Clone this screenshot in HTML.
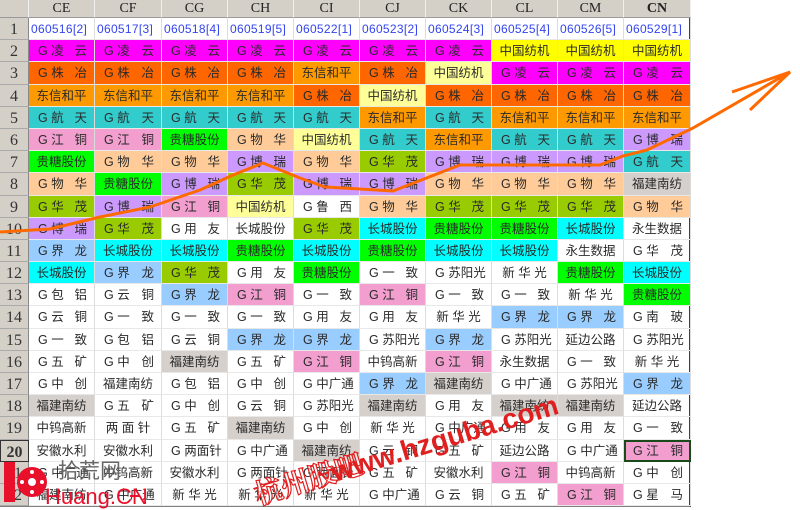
<!DOCTYPE html>
<html><head><meta charset="utf-8"><style>
*{margin:0;padding:0;box-sizing:border-box}
body{width:800px;height:510px;background:#fff;position:relative;overflow:hidden;font-family:"Liberation Sans","Noto Sans CJK SC",sans-serif}
#g{position:absolute;left:0;top:0;display:grid;grid-template-columns:29px 66px 67px 66px 66px 66px 66px 66px 66px 66px 67px;grid-template-rows:18px repeat(22,22.2px);width:691px;border-right:2px solid #404040;border-bottom:1px solid #808080}
#g>div{position:relative;font-size:12.5px;line-height:23px;white-space:pre;padding-left:9px;color:#2a2a2a;border-right:1px solid #dcdcdc;border-bottom:1px solid #e8e8e8;overflow:hidden;font-family:"Liberation Sans","WenQuanYi Zen Hei","Noto Sans CJK SC",sans-serif}
#g>div b{position:absolute;right:7px;top:0;font-weight:normal}
#g>div.c{padding-left:0;text-align:center}
#g>div.h{background:#d4d0c8;text-align:center;padding:0;font-size:14px;line-height:18px;color:#222;border-right:1px solid #f0f0f0;border-bottom:1px solid #999;font-family:"Liberation Serif",serif}
#g>div.n{background:#d4d0c8;text-align:center;padding:0;font-size:16px;line-height:24px;color:#333;border-bottom:1px solid #aaa;border-right:1px solid #888;font-family:"Liberation Serif",serif}
#g>div.d{color:#3344ee;font-size:12px;padding-left:2px;font-family:"Liberation Sans",sans-serif;letter-spacing:0.3px}
.M{background:#ff00ff}.D{background:#ff6600}.O{background:#ff9900}.T{background:#33cccc}.P{background:#f29fd0}.G{background:#00ff00}.E{background:#ffcc99}.U{background:#cc99ff}.V{background:#99cc00}.L{background:#ffff99}.Y{background:#ffff00}.C{background:#00ffff}.B{background:#99ccff}.R{background:#d6d0cc}
#g>div.sel{outline:2px solid #1a4a1a;outline-offset:-2px}
</style></head><body>
<div id="g">
<div class="h"></div><div class="h">CE</div><div class="h">CF</div><div class="h">CG</div><div class="h">CH</div><div class="h">CI</div><div class="h">CJ</div><div class="h">CK</div><div class="h">CL</div><div class="h">CM</div><div class="h" style="font-weight:bold">CN</div>
<div class="n">1</div><div class="d">060516[2]</div><div class="d">060517[3]</div><div class="d">060518[4]</div><div class="d">060519[5]</div><div class="d">060522[1]</div><div class="d">060523[2]</div><div class="d">060524[3]</div><div class="d">060525[4]</div><div class="d">060526[5]</div><div class="d">060529[1]</div>
<div class="n">2</div><div class="M">G 凌<b>云</b></div><div class="M">G 凌<b>云</b></div><div class="M">G 凌<b>云</b></div><div class="M">G 凌<b>云</b></div><div class="M">G 凌<b>云</b></div><div class="M">G 凌<b>云</b></div><div class="M">G 凌<b>云</b></div><div class="Y c">中国纺机</div><div class="Y c">中国纺机</div><div class="Y c">中国纺机</div>
<div class="n">3</div><div class="D">G 株<b>冶</b></div><div class="D">G 株<b>冶</b></div><div class="D">G 株<b>冶</b></div><div class="D">G 株<b>冶</b></div><div class="O c">东信和平</div><div class="D">G 株<b>冶</b></div><div class="L c">中国纺机</div><div class="M">G 凌<b>云</b></div><div class="M">G 凌<b>云</b></div><div class="M">G 凌<b>云</b></div>
<div class="n">4</div><div class="O c">东信和平</div><div class="O c">东信和平</div><div class="O c">东信和平</div><div class="O c">东信和平</div><div class="D">G 株<b>冶</b></div><div class="L c">中国纺机</div><div class="D">G 株<b>冶</b></div><div class="D">G 株<b>冶</b></div><div class="D">G 株<b>冶</b></div><div class="D">G 株<b>冶</b></div>
<div class="n">5</div><div class="T">G 航<b>天</b></div><div class="T">G 航<b>天</b></div><div class="T">G 航<b>天</b></div><div class="T">G 航<b>天</b></div><div class="T">G 航<b>天</b></div><div class="O c">东信和平</div><div class="T">G 航<b>天</b></div><div class="O c">东信和平</div><div class="O c">东信和平</div><div class="O c">东信和平</div>
<div class="n">6</div><div class="P">G 江<b>铜</b></div><div class="P">G 江<b>铜</b></div><div class="G c">贵糖股份</div><div class="E">G 物<b>华</b></div><div class="L c">中国纺机</div><div class="T">G 航<b>天</b></div><div class="O c">东信和平</div><div class="T">G 航<b>天</b></div><div class="T">G 航<b>天</b></div><div class="U">G 博<b>瑞</b></div>
<div class="n">7</div><div class="G c">贵糖股份</div><div class="E">G 物<b>华</b></div><div class="E">G 物<b>华</b></div><div class="U">G 博<b>瑞</b></div><div class="E">G 物<b>华</b></div><div class="V">G 华<b>茂</b></div><div class="U">G 博<b>瑞</b></div><div class="U">G 博<b>瑞</b></div><div class="U">G 博<b>瑞</b></div><div class="T">G 航<b>天</b></div>
<div class="n">8</div><div class="E">G 物<b>华</b></div><div class="G c">贵糖股份</div><div class="U">G 博<b>瑞</b></div><div class="V">G 华<b>茂</b></div><div class="U">G 博<b>瑞</b></div><div class="U">G 博<b>瑞</b></div><div class="E">G 物<b>华</b></div><div class="E">G 物<b>华</b></div><div class="E">G 物<b>华</b></div><div class="R c">福建南纺</div>
<div class="n">9</div><div class="V">G 华<b>茂</b></div><div class="U">G 博<b>瑞</b></div><div class="P">G 江<b>铜</b></div><div class="L c">中国纺机</div><div>G 鲁<b>西</b></div><div class="E">G 物<b>华</b></div><div class="V">G 华<b>茂</b></div><div class="V">G 华<b>茂</b></div><div class="V">G 华<b>茂</b></div><div class="E">G 物<b>华</b></div>
<div class="n">10</div><div class="U">G 博<b>瑞</b></div><div class="V">G 华<b>茂</b></div><div>G 用<b>友</b></div><div class="c">长城股份</div><div class="V">G 华<b>茂</b></div><div class="C c">长城股份</div><div class="G c">贵糖股份</div><div class="G c">贵糖股份</div><div class="C c">长城股份</div><div class="c">永生数据</div>
<div class="n">11</div><div class="B">G 界<b>龙</b></div><div class="C c">长城股份</div><div class="C c">长城股份</div><div class="G c">贵糖股份</div><div class="C c">长城股份</div><div class="G c">贵糖股份</div><div class="C c">长城股份</div><div class="C c">长城股份</div><div class="c">永生数据</div><div>G 华<b>茂</b></div>
<div class="n">12</div><div class="C c">长城股份</div><div class="B">G 界<b>龙</b></div><div class="V">G 华<b>茂</b></div><div>G 用<b>友</b></div><div class="G c">贵糖股份</div><div>G 一<b>致</b></div><div>G 苏阳光</div><div class="c">新 华 光</div><div class="G c">贵糖股份</div><div class="C c">长城股份</div>
<div class="n">13</div><div>G 包<b>铝</b></div><div>G 云<b>铜</b></div><div class="B">G 界<b>龙</b></div><div class="P">G 江<b>铜</b></div><div>G 一<b>致</b></div><div class="P">G 江<b>铜</b></div><div>G 一<b>致</b></div><div>G 一<b>致</b></div><div class="c">新 华 光</div><div class="G c">贵糖股份</div>
<div class="n">14</div><div>G 云<b>铜</b></div><div>G 一<b>致</b></div><div>G 一<b>致</b></div><div>G 一<b>致</b></div><div>G 用<b>友</b></div><div>G 用<b>友</b></div><div class="c">新 华 光</div><div class="B">G 界<b>龙</b></div><div class="B">G 界<b>龙</b></div><div>G 南<b>玻</b></div>
<div class="n">15</div><div>G 一<b>致</b></div><div>G 包<b>铝</b></div><div>G 云<b>铜</b></div><div class="B">G 界<b>龙</b></div><div class="B">G 界<b>龙</b></div><div>G 苏阳光</div><div class="B">G 界<b>龙</b></div><div>G 苏阳光</div><div class="c">延边公路</div><div>G 苏阳光</div>
<div class="n">16</div><div>G 五<b>矿</b></div><div>G 中<b>创</b></div><div class="R c">福建南纺</div><div>G 五<b>矿</b></div><div class="P">G 江<b>铜</b></div><div class="c">中钨高新</div><div class="P">G 江<b>铜</b></div><div class="c">永生数据</div><div>G 一<b>致</b></div><div class="c">新 华 光</div>
<div class="n">17</div><div>G 中<b>创</b></div><div class="c">福建南纺</div><div>G 包<b>铝</b></div><div>G 中<b>创</b></div><div>G 中广通</div><div class="B">G 界<b>龙</b></div><div class="R c">福建南纺</div><div>G 中广通</div><div>G 苏阳光</div><div class="B">G 界<b>龙</b></div>
<div class="n">18</div><div class="R c">福建南纺</div><div>G 五<b>矿</b></div><div>G 中<b>创</b></div><div>G 云<b>铜</b></div><div>G 苏阳光</div><div class="R c">福建南纺</div><div>G 用<b>友</b></div><div class="R c">福建南纺</div><div class="R c">福建南纺</div><div class="c">延边公路</div>
<div class="n">19</div><div class="c">中钨高新</div><div class="c">两 面 针</div><div>G 五<b>矿</b></div><div class="R c">福建南纺</div><div>G 中<b>创</b></div><div class="c">新 华 光</div><div>G 中广通</div><div>G 用<b>友</b></div><div>G 用<b>友</b></div><div>G 一<b>致</b></div>
<div class="n" style="font-weight:bold;border:1px solid #333">20</div><div class="c">安徽水利</div><div class="c">安徽水利</div><div>G 两面针</div><div>G 中广通</div><div class="R c">福建南纺</div><div>G 云<b>铜</b></div><div>G 五<b>矿</b></div><div class="c">延边公路</div><div>G 中广通</div><div class="P sel">G 江<b>铜</b></div>
<div class="n">21</div><div>G 中广通</div><div class="c">中钨高新</div><div class="c">安徽水利</div><div>G 两面针</div><div>G 两面针</div><div>G 五<b>矿</b></div><div class="c">安徽水利</div><div class="P">G 江<b>铜</b></div><div class="c">中钨高新</div><div>G 中<b>创</b></div>
<div class="n">22</div><div class="c">福建南纺</div><div>G 中广通</div><div class="c">新 华 光</div><div class="c">新 华 光</div><div class="c">新 华 光</div><div>G 中广通</div><div>G 云<b>铜</b></div><div>G 五<b>矿</b></div><div class="P">G 江<b>铜</b></div><div>G 星<b>马</b></div>
</div>
<svg width="800" height="510" style="position:absolute;left:0;top:0">
<polyline points="0,232 50,229 100,217 150,207 200,190 233,175 263,163 300,178 325,187 360,189 393,191 460,165 600,165 623,156 647,150 693,128 790,72" fill="none" stroke="#ff6a00" stroke-width="3" stroke-linejoin="round"/>
<polyline points="732,92 790,72 750,110" fill="none" stroke="#ff6a00" stroke-width="3"/>
<rect x="4" y="462" width="11" height="40" fill="#e8102a"/>
<circle cx="32" cy="482" r="15" fill="#e8102a"/>
<circle cx="32" cy="482" r="4" fill="#fff"/>
<circle cx="32" cy="472" r="2" fill="#fff"/><circle cx="32" cy="492" r="2" fill="#fff"/><circle cx="22" cy="482" r="2" fill="#fff"/><circle cx="42" cy="482" r="2" fill="#fff"/>
<text x="58" y="478" font-size="21" fill="#666" font-family="Noto Sans CJK SC,sans-serif">拾荒网</text>
<text x="45" y="504" font-size="22" fill="#e8102a" font-family="Liberation Sans,sans-serif">Huang.CN</text>
<line x1="130" y1="496" x2="140" y2="496" stroke="#e8102a" stroke-width="2"/>
<text x="0" y="0" font-size="28" fill="#fff" fill-opacity="0.5" stroke="#e02020" stroke-width="1.2" font-family="Noto Serif CJK SC,serif" font-weight="bold" transform="translate(258,505) rotate(-17)">杭州股吧</text>
<text x="0" y="0" font-size="28" fill="#e02020" font-weight="bold" font-family="Liberation Sans,sans-serif" transform="translate(335,482) rotate(-17)">www.hzguba.com</text>
</svg>
</body></html>
